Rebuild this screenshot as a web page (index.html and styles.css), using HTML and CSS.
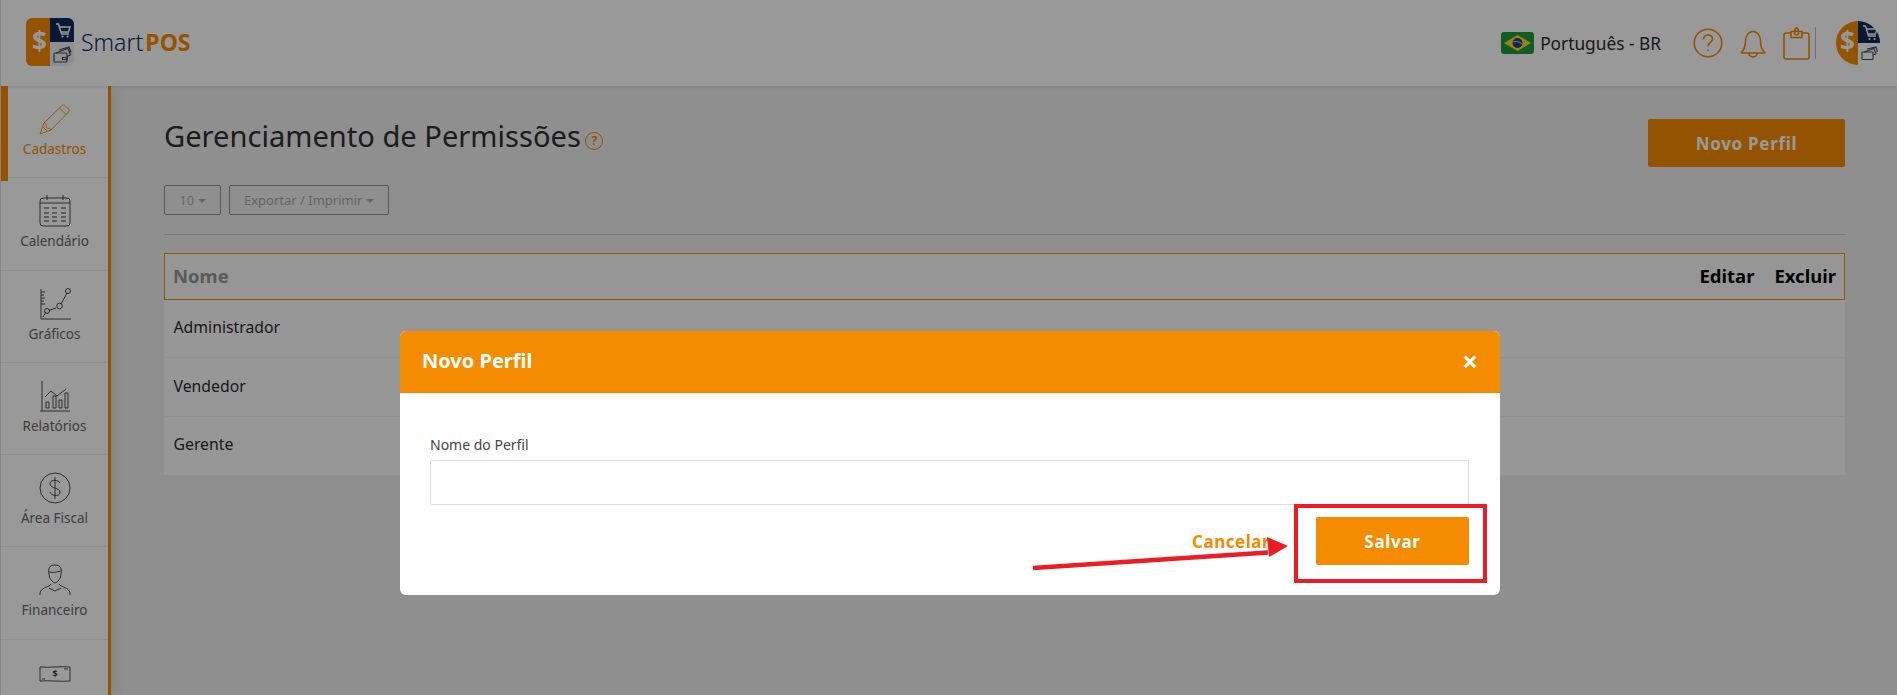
FILE: index.html
```html
<!DOCTYPE html>
<html lang="pt-BR">
<head>
  <meta charset="UTF-8" />
  <title>SmartPOS - Gerenciamento de Permissões</title>
  <link rel="stylesheet" href="styles.css">
</head>
<body>
  <header class="topbar">
    <div class="brand">
      <svg class="brand-logo" viewBox="0 0 48 48">
        <path d="M24 0H6a6 6 0 0 0-6 6v36a6 6 0 0 0 6 6h18z" fill="#f58b00"/>
        <path d="M24 0h18a6 6 0 0 1 6 6v18H24z" fill="#0d2a59"/>
        <path d="M24 24h24v18a6 6 0 0 1-6 6H24z" fill="#eee"/>
        <text x="13.500" y="33" class="logo-dollar">$</text>
        <path d="M30 6h2.500l3 10h7.500M33.500 9H44l-1.500 5H35" fill="none" stroke="#fff" stroke-width="1.500"/>
        <circle cx="36.500" cy="18.500" r="1.100" fill="#fff"/>
        <circle cx="41.500" cy="18.500" r="1.100" fill="#fff"/>
        <g fill="none" stroke="#3d4a66" stroke-width="1.200">
          <rect x="28" y="35" width="13" height="9" rx="1"/>
          <path d="M30 35l12-4.500 2.500 6.500-3.500 1.500M33 32l10-3 2 5.500M36.500 39.500h4.500v2h-4.500z"/>
        </g>
      </svg>
      <span class="brand-name">Smart<b>POS</b></span>
    </div>
    <div class="top-actions">
      <svg class="flag" viewBox="0 0 33 22">
        <rect width="33" height="22" rx="3" fill="#1f9a3c"/>
        <path d="M16.500 3L30 11 16.500 19 3 11z" fill="#ffdb1f"/>
        <circle cx="16.500" cy="11" r="5" fill="#1c3d8f"/>
        <path d="M11.800 10c3-1 6.500-.5 9.300 2" fill="none" stroke="#fff" stroke-width=".8"/>
      </svg>
      <span class="lang">Português - BR</span>
      <svg class="top-icon help" viewBox="0 0 30 30">
        <circle cx="15" cy="15" r="13.800"/>
        <path d="M10.500 11.500c0-6 9-6 9-.5 0 3.500-4.500 3.500-4.500 7.500M15 21.500v1.500"/>
      </svg>
      <svg class="top-icon bell" viewBox="0 0 26 30">
        <path d="M1.500 24c3-2.500 4-5 4-11 0-5 3-9.500 7.500-9.500s7.500 4.500 7.500 9.500c0 6 1 8.500 4 11 .5 1-.5 1-1 1H2.500c-.5 0-1.500 0-1-1zM9 25.500c.5 4.500 7.500 4.500 8 0"/>
      </svg>
      <svg class="top-icon board" viewBox="0 0 27 33">
        <path d="M8 6H3a2 2 0 0 0-2 2v22a2 2 0 0 0 2 2h21a2 2 0 0 0 2-2V8a2 2 0 0 0-2-2h-5M8 4.500h3.500C12 0 15 0 15.500 4.500H19v6H8z"/>
        <circle cx="13.500" cy="6" r="2"/>
      </svg>
      <span class="top-divider"></span>
      <svg class="avatar" viewBox="0 0 44 44">
        <path d="M22 0a22 22 0 0 0 0 44z" fill="#f58b00"/>
        <path d="M22 0a22 22 0 0 1 22 22H22z" fill="#0d2a59"/>
        <text x="11.500" y="30" class="logo-dollar">$</text>
        <path d="M27 5h2.500l3 10h7.500M30.500 8H41l-1.500 5H32" fill="none" stroke="#fff" stroke-width="1.300"/>
        <circle cx="33.500" cy="18" r="1" fill="#fff"/>
        <circle cx="38.500" cy="18" r="1" fill="#fff"/>
        <g fill="none" stroke="#3d4a66" stroke-width="1.100">
          <rect x="26" y="31" width="11" height="7.500" rx=".8"/>
          <path d="M28 31l10-3.500 2 5.500-3 1M31 28l9-2 1.500 5"/>
        </g>
      </svg>
    </div>
  </header>

  <div class="app">
    <nav class="sidebar">
      <a class="side-item active">
        <svg viewBox="0 0 32 32"><path d="M1 31l4-11L23 2.500c1-1 2-1 3 0l3.500 3.500c1 1 1 2 0 3L12 27zM5 20c3 0 2 3 2.500 4.500S11 24 12 27M20.500 5l6.500 6.500M4 24l4 4"/></svg>
        <span>Cadastros</span>
      </a>
      <a class="side-item">
        <svg viewBox="0 0 32 32"><path d="M4 3h24a3 3 0 0 1 3 3v22a3 3 0 0 1-3 3H4a3 3 0 0 1-3-3V6a3 3 0 0 1 3-3zM8 0v5M24 0v5M1 8h30"/><path class="dash" d="M5 13h5M13 13h5M22 13h5M5 18h5M13 18h5M22 18h5M5 22h5M13 22h5M22 22h5M5 26h5M13 26h5M22 26h5"/></svg>
        <span>Calendário</span>
      </a>
      <a class="side-item">
        <svg viewBox="0 0 32 32"><path d="M2 1v30h30M2 4h4M2 7h3M2 10h4M2 13h3M2 16h4M4 29l3-5M10 22.500l7-2.500M22 16l6-11"/><circle cx="8" cy="23" r="2.500"/><circle cx="20.500" cy="18" r="2.800"/><circle cx="29" cy="3" r="2.500"/></svg>
        <span>Gráficos</span>
      </a>
      <a class="side-item">
        <svg viewBox="0 0 32 32"><path d="M3 1v30M1 31h30M6 17l6-6 6 5 9-7M7 28v-6h3v6zM14 28V16h3v12zM20 28v-8h3v8zM26 28V13h3v15z"/></svg>
        <span>Relatórios</span>
      </a>
      <a class="side-item">
        <svg viewBox="0 0 32 32"><circle cx="16" cy="16" r="15"/><path d="M21 11c-1-3-9-4-10 0-1 6 11 4 10 10-1 4-9 3-10-1M16 5v22"/></svg>
        <span>Área Fiscal</span>
      </a>
      <a class="side-item">
        <svg viewBox="0 0 32 32"><path d="M16 1c-6 0-7 4-6 9 0 4 3 8 6 9 3-1 6-5 6-9 1-5 0-9-6-9zM10 8c4 1 8 0 12-1M12 20c-1 3-10 3-11 9v2M20 20c1 3 10 3 11 9v2M10 24l6 3 6-3"/></svg>
        <span>Financeiro</span>
      </a>
      <a class="side-item last">
        <svg class="money" viewBox="0 0 32 18"><path d="M1 2c10 1 20-1 30 0v14c-10 1-20-1-30 0zM3 14h3M25 4h4"/><text x="16" y="11.500" class="money-sign">$</text></svg>
      </a>
    </nav>

    <main class="content">
      <div class="title-row">
        <h1>Gerenciamento de Permissões <span class="hint">?</span></h1>
        <button class="btn-new" type="button">Novo Perfil</button>
      </div>
      <div class="tools">
        <button class="btn-tool" type="button">10 <i class="caret"></i></button>
        <button class="btn-tool" type="button">Exportar / Imprimir <i class="caret"></i></button>
      </div>
      <hr class="rule">
      <table class="grid">
        <thead>
          <tr><th class="col-name">Nome</th><th>Editar</th><th>Excluir</th></tr>
        </thead>
        <tbody>
          <tr><td>Administrador</td><td></td><td></td></tr>
          <tr><td>Vendedor</td><td></td><td></td></tr>
          <tr><td>Gerente</td><td></td><td></td></tr>
        </tbody>
      </table>
    </main>
  </div>

  <div class="overlay">
    <div class="modal">
      <div class="modal-head">
        <h2>Novo Perfil</h2>
        <span class="modal-close">×</span>
      </div>
      <div class="modal-body">
        <label class="field-label" for="nome-perfil">Nome do Perfil</label>
        <input class="field" id="nome-perfil" type="text">
        <div class="modal-foot">
          <a class="btn-cancel">Cancelar</a>
          <button class="btn-save" type="button">Salvar</button>
        </div>
      </div>
    </div>
  </div>

  <!-- marcação em vermelho por cima do print -->
  <div class="mark-box"></div>
  <svg class="mark-arrow" viewBox="0 0 270 40">
    <path d="M1 33L236 17.500" fill="none" stroke="#ed1c24" stroke-width="4.500"/>
    <path d="M235 2L256 11 237 22z" fill="#ed1c24"/>
  </svg>
</body>
</html>
```

FILE: styles.css
```css
* {
  box-sizing: border-box;
  margin: 0;
  padding: 0;
  font-family: 'Noto Sans', sans-serif;
}

body {
  height: 100vh;
  overflow: hidden;
  display: flex;
  flex-direction: column;
  background: #efefef;
  border-left: 1px solid #e8dcda;
}

/* Topo */
.topbar {
  height: 86px;
  flex: none;
  display: flex;
  justify-content: space-between;
  align-items: center;
  background: #fff;
  box-shadow: 0 1px 4px rgba(0, 0, 0, 0.08);
  position: relative;
  z-index: 2;
  padding: 0 17px 0 25px;
}

.brand {
  display: flex;
  align-items: center;
  gap: 7px;
  margin-top: -3px;
}

.brand-logo {
  width: 48px;
  height: 48px;
}

.logo-dollar {
  font-size: 26px;
  font-weight: 700;
  fill: #fff;
  text-anchor: middle;
}

.brand-name {
  font-size: 23px;
  font-weight: 300;
  color: #0d2a59;
}

.brand-name b {
  font-size: 23px;
  font-weight: 700;
  color: #f58b00;
  margin-left: 2px;
}

.top-actions {
  display: flex;
  align-items: center;
}

.flag {
  width: 33px;
  height: 22px;
  margin-right: 6px;
}

.lang {
  font-size: 17.300px;
  color: #2b2b2b;
  margin-right: 32px;
}

.top-icon {
  fill: none;
  stroke: #f58b00;
  stroke-width: 1.6;
}

.help {
  width: 30px;
  height: 30px;
  margin-right: 17px;
}

.bell {
  width: 26px;
  height: 30px;
  margin-right: 17px;
}

.board {
  width: 27px;
  height: 33px;
}

.top-divider {
  width: 1px;
  height: 32px;
  background: #bbb;
  margin: 0 20px 0 5px;
}

.avatar {
  width: 44px;
  height: 44px;
}

/* Corpo */
.app {
  flex: 1;
  display: flex;
  min-height: 0;
}

.sidebar {
  width: 110px;
  flex: none;
  display: flex;
  flex-direction: column;
  background: #fff;
  border-right: 3px solid #f58b00;
  box-shadow: 3px 0 14px rgba(0, 0, 0, 0.1);
  position: relative;
}

.side-item {
  height: 92.300px;
  flex: none;
  display: flex;
  flex-direction: column;
  align-items: center;
  padding-top: 17px;
  border-bottom: 1px solid #f0f0f0;
  font-size: 13.500px;
  line-height: 18px;
  color: #666;
  position: relative;
}

.side-item.last {
  flex: 1;
  height: auto;
  min-height: 0;
  overflow: hidden;
  border-bottom: none;
}

.side-item svg {
  width: 32px;
  height: 32px;
  margin-bottom: 5px;
  flex: none;
  fill: none;
  stroke: #3a3a3a;
  stroke-width: 0.9;
}

.side-item .dash {
  stroke-width: 1.100;
}

.side-item svg.money {
  height: 18px;
  margin-top: 8px;
}

.money-sign {
  font-size: 9px;
  font-weight: 700;
  fill: #3a3a3a;
  stroke: none;
  text-anchor: middle;
}

.side-item.active {
  color: #f58b00;
}

.side-item.active svg {
  stroke: #f58b00;
}

.side-item.active::before {
  content: "";
  position: absolute;
  left: 0;
  top: 0;
  width: 7px;
  height: 95px;
  background: #f58b00;
}

.content {
  flex: 1;
  padding: 33px 52px 0 53px;
}

.title-row {
  display: flex;
  justify-content: space-between;
  align-items: flex-start;
}

h1 {
  font-size: 29.100px;
  font-weight: 400;
  color: #2f2f2f;
  margin-top: -3px;
}

.hint {
  display: inline-block;
  width: 18px;
  height: 18px;
  border: 1.500px solid #f58b00;
  border-radius: 50%;
  color: #f58b00;
  font-size: 12px;
  font-weight: 700;
  line-height: 15px;
  text-align: center;
  vertical-align: 2px;
  margin-left: -3px;
}

.btn-new {
  width: 197px;
  height: 48px;
  border: none;
  border-radius: 2px;
  background: #f58b00;
  color: #fff;
  font-size: 17px;
  font-weight: 700;
  letter-spacing: 0.700px;
}

.tools {
  display: flex;
  gap: 8px;
  margin-top: 18px;
}

.btn-tool {
  height: 30px;
  padding: 0 14px;
  background: transparent;
  border: 1px solid #8f8f8f;
  border-radius: 2px;
  color: #aaa;
  font-size: 13px;
}

.btn-tool:first-child {
  min-width: 57px;
}

.caret {
  display: inline-block;
  border-top: 4px solid #aaa;
  border-left: 4px solid transparent;
  border-right: 4px solid transparent;
  vertical-align: 2px;
}

.rule {
  border: none;
  border-top: 1px solid #cbcbcb;
  margin: 19px 0 18px;
}

.grid {
  width: 100%;
  border-collapse: collapse;
  background: #fcfcfc;
}

.grid th {
  height: 46px;
  border-top: 1px solid #f58b00;
  border-bottom: 1px solid #f58b00;
  background: #fafafa;
  font-size: 18.500px;
  font-weight: 700;
  color: #000;
  text-align: left;
  padding: 0 10px 2px;
  width: 1px;
  white-space: nowrap;
}

.grid th:first-child {
  border-left: 1px solid #f58b00;
  padding-left: 8px;
}

.grid th:last-child {
  border-right: 1px solid #f58b00;
  padding-right: 8px;
}

.grid th.col-name {
  width: auto;
  color: #969696;
}

.grid td {
  height: 58.400px;
  padding: 0 9px 3px;
  border-bottom: 1px solid #f0f0f0;
  font-size: 15.800px;
  color: #2b2b2b;
}

.grid tr:last-child td {
  border-bottom: none;
}

/* Modal */
.overlay {
  position: fixed;
  inset: 0;
  z-index: 5;
  background: rgba(0, 0, 0, 0.4);
}

.modal {
  width: 1100px;
  margin: 331px 0 0 400px;
  background: #fff;
  border-radius: 6px;
  overflow: hidden;
}

.modal-head {
  height: 62px;
  background: #f58b00;
  color: #fff;
  display: flex;
  justify-content: space-between;
  align-items: center;
  padding: 0 22px 3px;
}

.modal-head h2 {
  font-size: 20px;
  font-weight: 700;
}

.modal-close {
  font-size: 28px;
  font-weight: 700;
  line-height: 1;
}

.modal-body {
  padding: 42px 31px 30px 30px;
}

.field-label {
  display: block;
  font-size: 14px;
  color: #444;
  margin-bottom: 6px;
}

.field {
  display: block;
  width: 100%;
  height: 45px;
  border: 1px solid #ddd;
  border-radius: 2px;
}

.modal-foot {
  display: flex;
  justify-content: flex-end;
  align-items: center;
  gap: 46px;
  margin-top: 12px;
}

.btn-cancel {
  font-size: 17px;
  font-weight: 700;
  letter-spacing: 0.5px;
  color: #f58b00;
}

.btn-save {
  width: 153px;
  height: 48px;
  border: none;
  border-radius: 2px;
  background: #f58b00;
  color: #fff;
  font-size: 17px;
  font-weight: 700;
  letter-spacing: 0.7px;
}

/* Marcação */
.mark-box {
  position: fixed;
  z-index: 6;
  left: 1294px;
  top: 504px;
  width: 193px;
  height: 79px;
  border: 4px solid #ed1c24;
}

.mark-arrow {
  position: fixed;
  z-index: 6;
  left: 1032px;
  top: 535px;
  width: 270px;
  height: 40px;
}
```
